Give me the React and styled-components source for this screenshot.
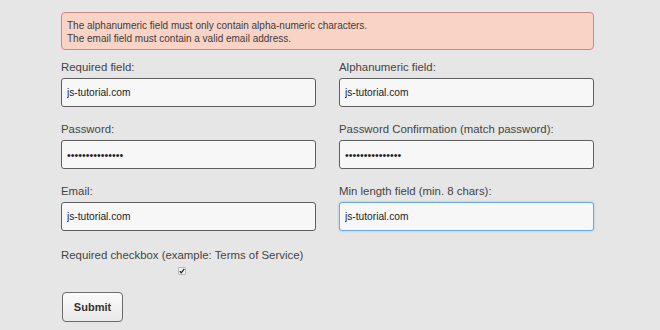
import React from "react";
import styled, { createGlobalStyle } from "styled-components";

const Global = createGlobalStyle`
  html, body { margin: 0; padding: 0; }
  body {
    background: #e6e6e6;
    font-family: "Liberation Sans", Arial, sans-serif;
    width: 660px;
    height: 330px;
    overflow: hidden;
  }
`;

const Page = styled.div`
  padding: 12px 0 0 61px;
  width: 533px;
`;

const ErrorBox = styled.div`
  box-sizing: border-box;
  height: 38px;
  background: #f9d3c6;
  border: 1px solid #c98b80;
  border-radius: 4px;
  padding: 6px 5px 0;
  font-size: 10px;
  line-height: 13px;
  color: #3c3c3c;
`;

const Grid = styled.div`
  display: grid;
  grid-template-columns: 255px 255px;
  column-gap: 23px;
  row-gap: 16px;
  margin-top: 11px;
`;

const Field = styled.div`
  display: flex;
  flex-direction: column;
`;

const Label = styled.label`
  font-size: 11.4px;
  line-height: 13px;
  color: #444;
  margin-bottom: 4px;
`;

const Input = styled.input`
  box-sizing: border-box;
  height: 29px;
  width: 100%;
  margin: 0;
  padding: 0 5px;
  font-family: "Liberation Sans", Arial, sans-serif;
  font-size: ${(p) => (p.type === "password" ? "10.7px" : "10.2px")};
  color: #222;
  background: #f7f7f7;
  border: 1px solid ${(p) => (p.$focused ? "#6aa9dc" : "#5e5e5e")};
  border-radius: 3px;
  outline: none;
  box-shadow: ${(p) => (p.$focused ? "0 0 2px rgba(90,160,220,0.6)" : "none")};
`;

const CheckWrap = styled.div`
  display: inline-flex;
  flex-direction: column;
  align-items: center;
  margin-top: 18px;
`;

const CheckLabel = styled.span`
  font-size: 11.4px;
  line-height: 13px;
  color: #444;
`;

const Box = styled.span`
  box-sizing: border-box;
  display: flex;
  align-items: center;
  justify-content: center;
  width: 8px;
  height: 8px;
  margin-top: 5px;
  background: #f4f4f4;
  border: 1px solid #b8b8b8;
  border-radius: 1px;
`;

const Submit = styled.button`
  display: block;
  box-sizing: border-box;
  width: 61px;
  height: 30px;
  margin: 17px 0 0 1px;
  font-family: "Liberation Sans", Arial, sans-serif;
  font-weight: bold;
  font-size: 11px;
  color: #333;
  background: linear-gradient(#fbfbfb, #e9e9e9);
  border: 1px solid #6b6b6b;
  border-radius: 4px;
  padding: 0;
`;

const fields = [
  { label: "Required field:", type: "text" },
  { label: "Alphanumeric field:", type: "text" },
  { label: "Password:", type: "password" },
  { label: "Password Confirmation (match password):", type: "password" },
  { label: "Email:", type: "text" },
  { label: "Min length field (min. 8 chars):", type: "text", focused: true },
];

export default function App() {
  return (
    <>
      <Global />
      <Page>
        <ErrorBox>
          The alphanumeric field must only contain alpha-numeric characters.
          <br />
          The email field must contain a valid email address.
        </ErrorBox>
        <Grid>
          {fields.map((f, i) => (
            <Field key={i}>
              <Label>{f.label}</Label>
              <Input
                type={f.type}
                readOnly
                $focused={f.focused}
                defaultValue={f.type === "password" ? "123456789012345" : "js-tutorial.com"}
              />
            </Field>
          ))}
        </Grid>
        <CheckWrap>
          <CheckLabel>Required checkbox (example: Terms of Service)</CheckLabel>
          <Box>
            <svg width="6" height="6" viewBox="0 0 6 6">
              <path d="M0.8 3.2 L2.3 4.8 L5.3 0.9" fill="none" stroke="#222" strokeWidth="1.3" />
            </svg>
          </Box>
        </CheckWrap>
        <Submit type="button">Submit</Submit>
      </Page>
    </>
  );
}
